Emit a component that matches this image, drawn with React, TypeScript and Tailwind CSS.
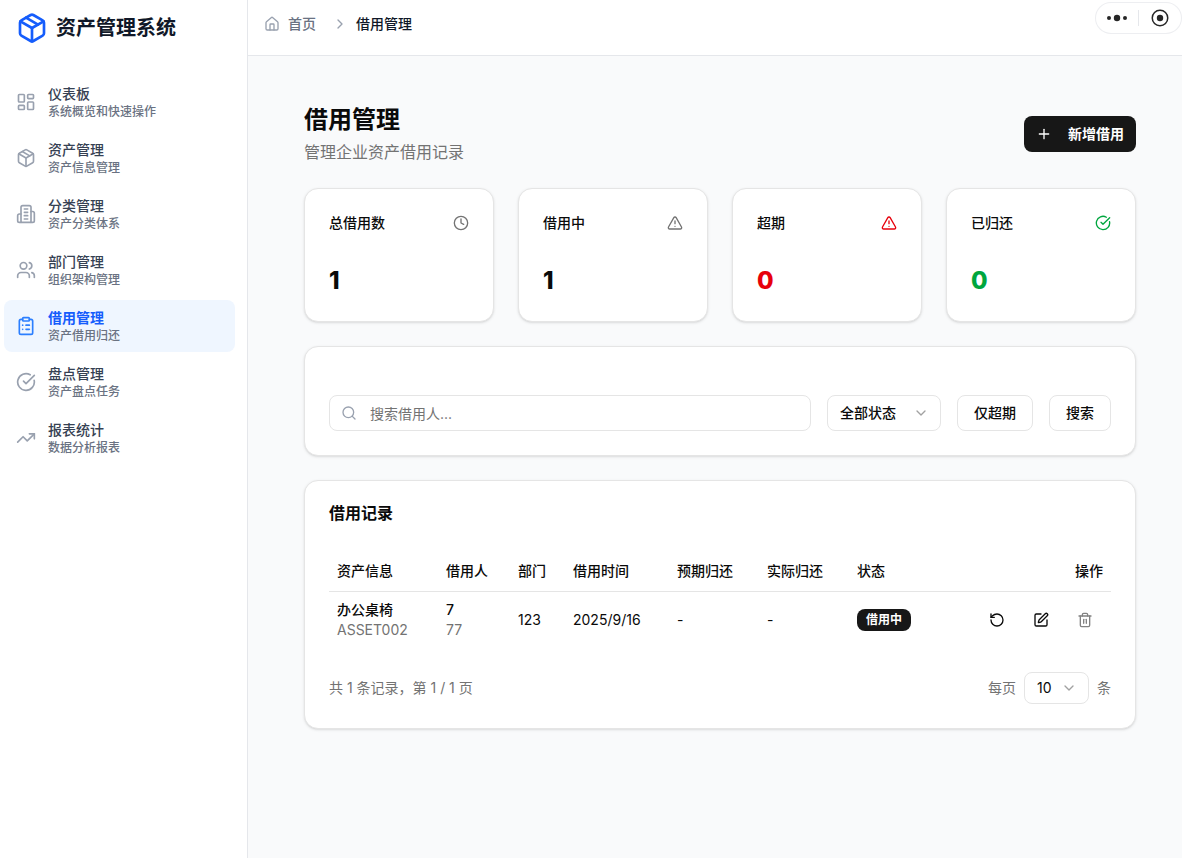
import React from "react";
import {
  Package, LayoutDashboard, Users, ClipboardList, CircleCheckBig, TrendingUp, House, ChevronRight,
  Plus, Clock, TriangleAlert, Search, ChevronDown, RotateCcw, SquarePen, Trash2,
} from "lucide-react";

function BuildingIcon({ className }: { className?: string }) {
  return (
    <svg
      viewBox="0 0 24 24"
      className={className}
      fill="none"
      stroke="currentColor"
      strokeWidth={2}
      strokeLinecap="round"
      strokeLinejoin="round"
      aria-hidden="true"
    >
      <path d="M6 22V4a2 2 0 0 1 2-2h8a2 2 0 0 1 2 2v18Z" />
      <path d="M6 12H4a2 2 0 0 0-2 2v6a2 2 0 0 0 2 2h2" />
      <path d="M18 9h2a2 2 0 0 1 2 2v9a2 2 0 0 1-2 2h-2" />
      <path d="M10 6h4M10 10h4M10 14h4M10 18h4" />
    </svg>
  );
}

const navItems = [
  { title: "仪表板", note: "系统概览和快速操作", icon: LayoutDashboard },
  { title: "资产管理", note: "资产信息管理", icon: Package },
  { title: "分类管理", note: "资产分类体系", icon: BuildingIcon },
  { title: "部门管理", note: "组织架构管理", icon: Users },
  { title: "借用管理", note: "资产借用归还", icon: ClipboardList, active: true },
  { title: "盘点管理", note: "资产盘点任务", icon: CircleCheckBig },
  { title: "报表统计", note: "数据分析报表", icon: TrendingUp },
];

const stats = [
  { label: "总借用数", value: 1, icon: Clock, iconColor: "text-neutral-500", valueColor: "text-neutral-950" },
  { label: "借用中", value: 1, icon: TriangleAlert, iconColor: "text-neutral-500", valueColor: "text-neutral-950" },
  { label: "超期", value: 0, icon: TriangleAlert, iconColor: "text-red-600", valueColor: "text-red-600" },
  { label: "已归还", value: 0, icon: CircleCheckBig, iconColor: "text-green-600", valueColor: "text-green-600" },
];

const card = "rounded-[14px] border border-neutral-200 bg-white shadow-sm";
const outline = "rounded-lg border border-neutral-200 bg-white text-sm";

function Sidebar() {
  return (
    <aside className="w-62 shrink-0 border-r border-gray-200 bg-white">
      <div className="flex h-14 items-center gap-2 px-4">
        <Package className="size-8 text-blue-600" />
        <span className="text-xl leading-7 font-bold text-gray-900">资产管理系统</span>
      </div>
      <nav className="mt-5 flex flex-col gap-1 pr-3 pl-1">
        {navItems.map(({ title, note, icon: Icon, active }) => (
          <a
            key={title}
            href="#"
            aria-current={active ? "page" : undefined}
            className={`flex h-13 items-center gap-3 rounded-lg px-3 ${active ? "bg-blue-50" : ""}`}
          >
            <Icon className={`size-5 ${active ? "text-blue-500" : "text-gray-400"}`} />
            <span className="flex flex-col">
              <span className={`text-sm leading-5 ${active ? "font-bold text-blue-600" : "font-medium text-gray-700"}`}>{title}</span>
              <span className="text-xs leading-4 font-medium text-gray-500">{note}</span>
            </span>
          </a>
        ))}
      </nav>
    </aside>
  );
}

function TopBar() {
  return (
    <header className="flex h-14 items-start justify-between border-b border-gray-200 bg-white pl-4">
      <nav aria-label="面包屑" className="flex h-12 items-center text-sm font-medium">
        <a href="#" className="flex items-center gap-2 text-gray-500">
          <House className="size-4 text-gray-400" />
          首页
        </a>
        <ChevronRight className="mr-2 ml-4 size-4 text-gray-400" />
        <span className="text-gray-900">借用管理</span>
      </nav>
      <div className="mt-[2px] flex h-8 w-[87px] items-center rounded-full border border-gray-200/70 bg-white">
        <button aria-label="更多" className="flex h-full flex-1 items-center justify-center">
          <svg viewBox="0 0 20 8" className="h-2 w-5 fill-neutral-800">
            <circle cx="2" cy="4" r="2" />
            <circle cx="10" cy="4" r="3.2" />
            <circle cx="18" cy="4" r="2" />
          </svg>
        </button>
        <span className="h-4 w-px bg-gray-200" />
        <button aria-label="关闭" className="flex h-full flex-1 items-center justify-center">
          <svg viewBox="0 0 18 18" className="size-[18px] fill-none text-neutral-800">
            <circle cx="9" cy="9" r="7.75" stroke="currentColor" strokeWidth="1.5" />
            <circle cx="9" cy="9" r="3.2" fill="currentColor" />
          </svg>
        </button>
      </div>
    </header>
  );
}

function Select({ label, value, options, className }: { label: string; value: string; options: string[]; className: string }) {
  return (
    <span className={`relative flex items-center ${className}`}>
      <select aria-label={label} defaultValue={value} className={`size-full appearance-none pl-3 ${outline}`}>
        {options.map((o) => (
          <option key={o}>{o}</option>
        ))}
      </select>
      <ChevronDown className="pointer-events-none absolute right-3 size-4 text-neutral-400" />
    </span>
  );
}

function Records() {
  const action = "flex h-8 w-9 items-center justify-center";
  return (
    <section className={`${card} p-6`}>
      <h2 className="text-base leading-4 font-semibold">借用记录</h2>
      <table className="mt-[30px] w-full table-fixed text-left text-sm">
        <thead>
          <tr className="h-10 border-b border-neutral-200 [&>th]:px-2 [&>th]:font-medium">
            <th className="w-[109px]">资产信息</th>
            <th className="w-[72px]">借用人</th>
            <th className="w-[55px]">部门</th>
            <th className="w-[104px]">借用时间</th>
            <th className="w-[90px]">预期归还</th>
            <th className="w-[90px]">实际归还</th>
            <th className="w-[90px]">状态</th>
            <th className="text-right">操作</th>
          </tr>
        </thead>
        <tbody>
          <tr className="h-[57px] [&>td]:px-2">
            <td>
              <div className="font-medium">办公桌椅</div>
              <div className="text-neutral-500">ASSET002</div>
            </td>
            <td>
              <div className="font-medium">7</div>
              <div className="text-neutral-500">77</div>
            </td>
            <td>123</td>
            <td>2025/9/16</td>
            <td>-</td>
            <td>-</td>
            <td>
              <span className="flex h-[22px] w-fit items-center rounded-lg bg-neutral-900 px-[9px] text-xs font-semibold text-white">借用中</span>
            </td>
            <td>
              <div className="flex justify-end gap-2">
                <button aria-label="归还" className={action}><RotateCcw className="size-4" /></button>
                <button aria-label="编辑" className={action}><SquarePen className="size-4" /></button>
                <button aria-label="删除" disabled className={`${action} opacity-50`}><Trash2 className="size-4" /></button>
              </div>
            </td>
          </tr>
        </tbody>
      </table>
      <div className="mt-6 flex items-center justify-between text-sm text-neutral-500">
        <span>共 1 条记录，第 1 / 1 页</span>
        <div className="flex items-center gap-2">
          <span>每页</span>
          <Select label="每页条数" value="10" options={["10", "20", "50"]} className="h-8 w-[65px] text-neutral-950" />
          <span>条</span>
        </div>
      </div>
    </section>
  );
}

export default function App() {
  return (
    <div className="flex min-h-screen bg-gray-50 font-['Inter','Noto_Sans_CJK_SC',sans-serif] text-neutral-950">
      <Sidebar />
      <div className="min-w-0 flex-1">
        <TopBar />
        <main className="flex flex-col gap-6 pt-12 pr-[46px] pb-8 pl-14">
          <div className="flex items-center justify-between">
            <div>
              <h1 className="text-2xl leading-8 font-bold">借用管理</h1>
              <p className="mt-1 text-base leading-6 text-neutral-500">管理企业资产借用记录</p>
            </div>
            <button className="flex h-9 items-center gap-4 rounded-lg bg-neutral-900 px-3 text-sm font-semibold text-white">
              <Plus className="size-4" />
              新增借用
            </button>
          </div>
          <div className="grid grid-cols-4 gap-6">
            {stats.map(({ label, value, icon: Icon, iconColor, valueColor }) => (
              <section key={label} className={`${card} flex flex-col gap-8 p-6`}>
                <div className="flex items-center justify-between">
                  <h2 className="text-sm leading-5 font-medium">{label}</h2>
                  <Icon className={`size-4 ${iconColor}`} />
                </div>
                <div className={`text-2xl leading-8 font-extrabold ${valueColor}`}>{value}</div>
              </section>
            ))}
          </div>
          <section className={`${card} flex gap-4 px-6 pt-12 pb-6`}>
            <label className="relative flex flex-1 items-center">
              <Search className="absolute left-3 size-4 text-gray-400" />
              <input aria-label="搜索借用人" placeholder="搜索借用人..." className="h-9 w-full rounded-lg border border-neutral-200 pl-10 text-sm placeholder:text-neutral-500" />
            </label>
            <Select label="状态" value="全部状态" options={["全部状态", "借用中", "已归还"]} className="h-9 w-[114px] font-medium" />
            <button className={`h-9 px-4 font-medium ${outline}`}>仅超期</button>
            <button className={`h-9 px-4 font-medium ${outline}`}>搜索</button>
          </section>
          <Records />
        </main>
      </div>
    </div>
  );
}
